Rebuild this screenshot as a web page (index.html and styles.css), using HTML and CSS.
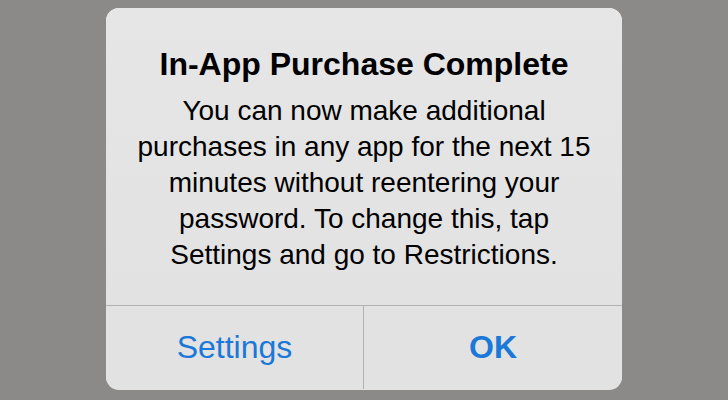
FILE: index.html
```html
<!DOCTYPE html>
<html lang="en">
<head>
    <meta charset="UTF-8">
    <meta name="viewport" content="width=device-width, initial-scale=1.0">
    <title>In-App Purchase Complete</title>
    <link rel="stylesheet" href="styles.css">
</head>
<body>

<div class="alert">
    <div class="alert-body">
        <h1 class="alert-title">In-App Purchase Complete</h1>
        <p class="alert-message">You can now make additional purchases in any app for the next 15 minutes without reentering your password. To change this, tap Settings and go to Restrictions.</p>
    </div>
    <div class="alert-buttons">
        <button class="alert-button">Settings</button>
        <button class="alert-button primary">OK</button>
    </div>
</div>

</body>
</html>
```

FILE: styles.css
```css
html, body {
    margin: 0;
    padding: 0;
}
body {
    background-color: #8b8a88;
    font-family: "Liberation Sans", Arial, sans-serif;
    height: 400px;
    overflow: hidden;
}
.alert {
    width: 516px;
    margin: 8px auto 0;
    background-color: #e4e4e4;
    border-radius: 13px;
    box-shadow: 0 1px 0 rgba(255, 255, 255, 0.75);
    overflow: hidden;
}
.alert-body {
    padding: 38px 20px 32px;
    text-align: center;
    background: linear-gradient(#e6e6e6, #e2e2e2);
}
.alert-title {
    margin: 0 0 11px;
    font-size: 32px;
    line-height: 36px;
    font-weight: bold;
    color: #000;
}
.alert-message {
    margin: 0;
    font-size: 28px;
    line-height: 36px;
    color: #000;
}
.alert-buttons {
    display: grid;
    grid-template-columns: 257px 1fr;
    border-top: 1px solid #b2b2b2;
    background-color: #e2e2e2;
}
.alert-button {
    height: 83px;
    padding: 0 0 0 0;
    border: none;
    background: none;
    font-family: inherit;
    font-size: 32px;
    color: #1a78d8;
}
.alert-button + .alert-button {
    border-left: 1px solid #b2b2b2;
}
.alert-button.primary {
    font-weight: bold;
}
```
